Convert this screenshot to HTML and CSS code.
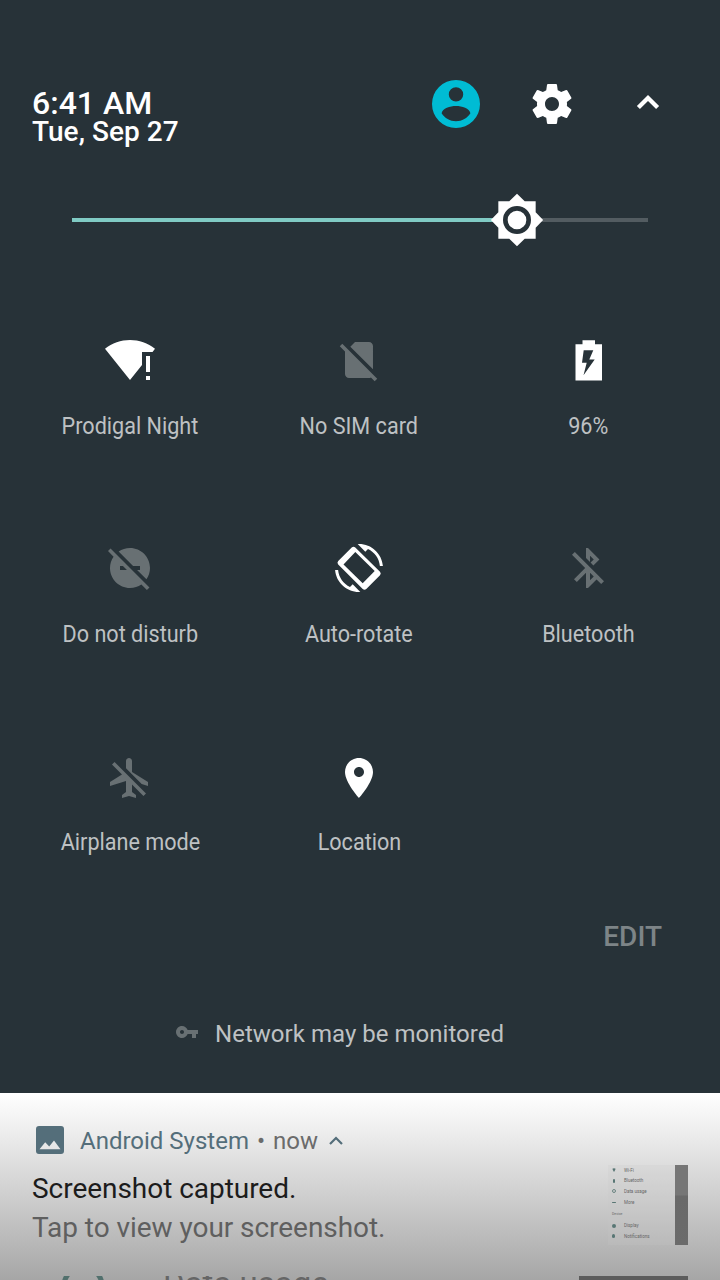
FILE: index.html
```html
<!DOCTYPE html>
<html lang="en">
<head>
    <meta charset="UTF-8">
    <meta name="viewport" content="width=device-width, initial-scale=1.0">
    <title>Quick settings</title>
    <link rel="stylesheet" href="styles.css">
</head>
<body>
    <div class="panel">
        <div class="header">
            <div class="clock">
                <div class="time">6:41 AM</div>
                <div class="date">Tue, Sep 27</div>
            </div>
            <div class="actions">
                <svg class="icon user" viewBox="0 0 48 48"><path fill-rule="evenodd" d="M24 0a24 24 0 1 0 0 48a24 24 0 1 0 0-48zM24 7.2a7.2 7.2 0 1 1 0 14.4a7.2 7.2 0 1 1 0-14.4zM9.6 33.2C10.5 28 18 26 24 26s13.5 2 14.4 7.2C35.3 38 30 41.2 24 41.2S12.7 38 9.6 33.2z"/></svg>
                <svg class="icon" viewBox="0 0 24 24"><path d="M19.43 12.98c.04-.32.07-.64.07-.98s-.03-.66-.07-.98l2.11-1.65c.19-.15.24-.42.12-.64l-2-3.46c-.12-.22-.39-.3-.61-.22l-2.49 1c-.52-.4-1.08-.73-1.69-.98l-.38-2.65C14.46 2.18 14.25 2 14 2h-4c-.25 0-.46.18-.49.42l-.38 2.65c-.61.25-1.17.59-1.69.98l-2.49-1c-.23-.09-.49 0-.61.22l-2 3.46c-.13.22-.07.49.12.64l2.11 1.65c-.04.32-.07.65-.07.98s.03.66.07.98l-2.11 1.65c-.19.15-.24.42-.12.64l2 3.46c.12.22.39.3.61.22l2.49-1c.52.4 1.08.73 1.69.98l.38 2.65c.03.24.24.42.49.42h4c.25 0 .46-.18.49-.42l.38-2.65c.61-.25 1.17-.59 1.69-.98l2.49 1c.23.09.49 0 .61-.22l2-3.46c.12-.22.07-.49-.12-.64l-2.11-1.65zM12 15.5c-1.93 0-3.5-1.57-3.5-3.5s1.57-3.5 3.5-3.5 3.5 1.57 3.5 3.5-1.57 3.5-3.5 3.5z"/></svg>
                <svg class="icon" viewBox="0 0 48 48"><path d="M24 15L12.9 26.1l3 3 8.1-8.1 8.1 8.1 3-3z"/></svg>
            </div>
        </div>

        <div class="brightness">
            <div class="level"></div>
            <svg class="thumb" viewBox="0 0 24 24"><path d="M20 15.31L23.2 12 20 8.69V4h-4.69L12 .8 8.69 4H4v4.69L.8 12 4 15.31V20h4.69L12 23.2 15.31 20H20z"/><circle cx="12" cy="12" r="5"/></svg>
        </div>

        <div class="tiles">
            <div class="tile">
                <svg class="icon" viewBox="0 0 48 48"><path d="M24 44L-1 12.7C6 7 15 4 24 4s18 3 25 8.7L46.5 16H36v13zM40 20h4v16h-4zM40 40h4v4h-4z"/></svg>
                <span class="label">Prodigal Night</span>
            </div>
            <div class="tile">
                <svg class="icon off" viewBox="0 0 24 24"><path d="M18.99 5c0-1.1-.89-2-1.99-2h-7L7.66 5.34 19 16.68 18.99 5zM3.65 3.88L2.38 5.15 5 7.77V19c0 1.1.9 2 2 2h10.01c.35 0 .67-.1.96-.26l1.88 1.88 1.27-1.27L3.65 3.88z"/></svg>
                <span class="label">No SIM card</span>
            </div>
            <div class="tile">
                <svg class="icon" viewBox="0 0 48 48"><path fill-rule="evenodd" d="M11.5 8.2h7V4.2h12.500v4H38v36.300H11.500zM19.700 14.200h9.600l-4 9.300h5.400L19.500 39.200l3.200-12.500H18z"/></svg>
                <span class="label">96%</span>
            </div>
            <div class="tile">
                <svg class="icon off" viewBox="0 0 24 24"><path d="M17 11v2h-1.46l4.68 4.68C21.34 16.07 22 14.11 22 12c0-5.52-4.48-10-10-10-2.11 0-4.07.66-5.68 1.78L13.54 11H17zM2.27 2.27L1 3.54l2.78 2.78C2.66 7.93 2 9.89 2 12c0 5.52 4.48 10 10 10 2.11 0 4.07-.66 5.68-1.78L20.46 23l1.27-1.27L11 11 2.27 2.27zM7 13v-2h1.46l2 2H7z"/></svg>
                <span class="label">Do not disturb</span>
            </div>
            <div class="tile">
                <svg class="icon" viewBox="0 0 48 48"><path d="M33 5c6.5 3.1 11.2 9.4 11.9 17h3C46.9 9.7 36.6 0 24 0l-1.3.1 7.6 7.6zM15 43C8.5 39.9 3.8 33.5 3.1 26h-3C1.1 38.3 11.4 48 24 48l1.3-.1-7.6-7.6z"/><path fill-rule="evenodd" d="M16.7 3.5q1.8-1.5 3.6 0L45 27.7q1.5 1.8 0 3.6L31.3 45q-1.8 1.5-3.6 0L3.2 20.6q-1.5-1.8 0-3.6zM20.3 8L8.5 20.6 27.7 39.3 39.7 27z"/></svg>
                <span class="label">Auto-rotate</span>
            </div>
            <div class="tile">
                <svg class="icon off" viewBox="0 0 24 24"><path d="M13 5.83l1.88 1.88-1.6 1.6 1.41 1.41 3.02-3.02L12 2h-1v5.03l2 2v-3.2zM5.41 4L4 5.41 10.59 12 5 17.59 6.41 19 11 14.41V22h1l4.29-4.29 2.3 2.29L20 18.59 5.41 4zM13 18.17v-3.76l1.88 1.88L13 18.17z"/></svg>
                <span class="label">Bluetooth</span>
            </div>
            <div class="tile last">
                <svg class="icon off" viewBox="0 0 24 24"><path d="M13 9V3.5c0-.83-.67-1.5-1.5-1.5S10 2.67 10 3.5v3.68l7.83 7.83L21 16v-2l-8-5zM3 5.27l4.99 4.99L2 14v2l8-2.5V19l-2 1.5V22l3.5-1 3.5 1v-1.5L13 19v-3.73L18.73 21 20 19.73 4.27 4 3 5.27z"/></svg>
                <span class="label">Airplane mode</span>
            </div>
            <div class="tile last">
                <svg class="icon" viewBox="0 0 24 24"><path d="M12 2C8.13 2 5 5.13 5 9c0 5.25 7 13 7 13s7-7.75 7-13c0-3.87-3.13-7-7-7zm0 9.5c-1.38 0-2.5-1.12-2.5-2.5s1.12-2.5 2.5-2.5 2.5 1.12 2.5 2.5-1.12 2.5-2.5 2.5z"/></svg>
                <span class="label">Location</span>
            </div>
        </div>

        <div class="edit">EDIT</div>
        <div class="footer">
            <svg class="key" viewBox="0 0 24 24"><path d="M12.65 10C11.83 7.67 9.61 6 7 6c-3.31 0-6 2.69-6 6s2.69 6 6 6c2.61 0 4.83-1.67 5.65-4H17v4h4v-4h2v-4H12.65zM7 14c-1.1 0-2-.9-2-2s.9-2 2-2 2 .9 2 2-.9 2-2 2z"/></svg>
            <span>Network may be monitored</span>
        </div>
    </div>

    <div class="notifications">
        <div class="notification">
            <div class="text">
                <div class="app">
                    <svg class="picture" viewBox="0 0 28 28"><path fill-rule="evenodd" d="M3 0h22q3 0 3 3v22q0 3-3 3H3q-3 0-3-3V3q0-3 3-3zM3.5 23.3h21L18 14.5l-4.8 6-4-4.2z"/></svg>
                    <span class="app-name">Android System</span>
                    <span class="dot">•</span>
                    <span class="when">now</span>
                    <svg class="collapse" viewBox="0 0 14 9"><path d="M1 8l6-6 6 6"/></svg>
                </div>
                <div class="title">Screenshot captured.</div>
                <div class="subtitle">Tap to view your screenshot.</div>
            </div>
            <div class="preview">
                <div class="menu">
                    <div class="item"><i class="mark wifi"></i>Wi-Fi</div>
                    <div class="item"><i class="mark thin"></i>Bluetooth</div>
                    <div class="item"><i class="mark ring"></i>Data usage</div>
                    <div class="item"><i class="mark dash"></i>More</div>
                    <div class="item section">Device</div>
                    <div class="item"><i class="mark"></i>Display</div>
                    <div class="item"><i class="mark bell"></i>Notifications</div>
                </div>
                <div class="side"></div>
            </div>
        </div>
        <div class="next">
            <svg class="usage" viewBox="0 0 44 44"><circle cx="22" cy="22" r="19"/></svg>
            <span class="next-title">Data usage</span>
            <div class="next-preview"></div>
        </div>
    </div>
</body>
</html>
```

FILE: styles.css
```css
body {
    margin: 0;
    height: 1280px;
    overflow: hidden;
    background: #263238;
    font-family: Roboto, sans-serif;
    color: white;
}
svg {
    display: block;
    flex: none;
    overflow: visible;
}
.panel {
    height: 1093px;
    background: #273238;
}
.header {
    display: flex;
    justify-content: space-between;
    padding: 80px 48px 0 32px;
    height: 48px;
}
.clock {
    padding-top: 8px;
    font-weight: 500;
    white-space: nowrap;
}
.time {
    font-size: 32px;
    line-height: 30px;
}
.date {
    font-size: 28px;
    line-height: 28px;
    letter-spacing: 0.05px;
}
.actions {
    display: flex;
    gap: 48px;
}
.icon {
    width: 48px;
    height: 48px;
    fill: white;
}
.user {
    fill: #00bcd4;
}
.off {
    fill: #687073;
}
.brightness {
    display: flex;
    align-items: center;
    margin: 90px 72px 0;
    height: 4px;
    background: #535c61;
}
.level {
    width: 445px;
    height: 4px;
    background: #80cbc4;
}
.thumb {
    width: 56px;
    height: 56px;
    margin-left: -28px;
    fill: white;
}
.thumb circle {
    stroke: #273238;
    stroke-width: 2;
}
.tiles {
    display: grid;
    grid-template-columns: repeat(3, 229px);
    grid-auto-rows: 208px;
    margin: 114px 0 0 15.5px;
}
.tile {
    display: flex;
    flex-direction: column;
    align-items: center;
}
.label {
    margin-top: 28px;
    font-size: 24px;
    line-height: 28px;
    color: #bec1c3;
    white-space: nowrap;
    transform: scaleX(0.9);
}
.last .icon {
    margin-top: 1.5px;
}
.last .label {
    margin-top: 26.5px;
}
.edit {
    margin: -39px 58px 0 0;
    text-align: right;
    font-size: 28px;
    line-height: 32px;
    font-weight: 500;
    color: #7d8487;
}
.footer {
    display: flex;
    align-items: center;
    margin: 65px 0 0 175px;
    font-size: 24px;
    line-height: 32px;
    letter-spacing: 0.03px;
    color: #bec1c3;
}
.key {
    width: 24px;
    height: 24px;
    margin-right: 16px;
    margin-top: -4px;
    fill: #687073;
}
.notifications {
    height: 187px;
    overflow: hidden;
    background: linear-gradient(#ffffff, #eeeeee 20%, #a6a6a6);
}
.notification {
    display: flex;
    justify-content: space-between;
    height: 183px;
    padding: 0 32px;
    box-sizing: border-box;
}
.app {
    display: flex;
    align-items: center;
    margin-top: 32px;
    font-size: 24px;
    line-height: 32px;
    color: #546e7a;
}
.picture {
    width: 28px;
    height: 28px;
    margin: -2px 16px 0 4px;
    fill: #546e7a;
}
.dot, .when {
    color: #6b6b6b;
}
.dot {
    margin: 0 8px;
}
.collapse {
    width: 14px;
    height: 9px;
    margin: -2px 0 0 11px;
    fill: none;
    stroke: #546e7a;
    stroke-width: 2.2;
}
.title {
    margin-top: 14px;
    font-size: 28px;
    line-height: 36px;
    letter-spacing: -0.04px;
    color: #1c1c1c;
}
.subtitle {
    margin-top: 3px;
    font-size: 28px;
    line-height: 36px;
    letter-spacing: -0.05px;
    color: #5f5f5f;
}
.preview {
    display: flex;
    width: 80px;
    height: 80px;
    margin-top: 72px;
}
.menu {
    width: 67px;
    background: rgba(200, 200, 200, 0.2);
    font-size: 4.5px;
    color: #666666;
}
.item {
    display: flex;
    align-items: center;
    height: 10.6px;
    padding-left: 4px;
}
.section {
    height: 13px;
    font-size: 3.5px;
}
.mark {
    width: 4px;
    height: 4px;
    margin-right: 8px;
    border-radius: 2px;
    background: #587674;
}
.wifi {
    clip-path: polygon(0 0, 100% 0, 50% 100%);
}
.thin {
    width: 2px;
    margin: 0 9px 0 1px;
}
.ring {
    box-sizing: border-box;
    border: 1px solid #6b8582;
    background: none;
}
.dash {
    height: 1px;
}
.bell {
    width: 3px;
    margin-right: 9px;
}
.side {
    width: 13px;
    background: linear-gradient(#767676 0 30px, #696969 31px, #6b6b6b);
}
.next {
    display: flex;
    height: 4px;
    overflow: hidden;
    padding: 0 32px;
}
.usage {
    width: 44px;
    height: 44px;
    margin: -12px 56px 0 29px;
    fill: none;
    stroke: #52706d;
    stroke-width: 5;
}
.next-title {
    margin-top: -8px;
    margin-left: 2px;
    font-size: 33px;
    line-height: 32px;
    color: #666666;
}
.next-preview {
    width: 109px;
    height: 4px;
    margin-left: auto;
    background: #5c5c5c;
}
```
